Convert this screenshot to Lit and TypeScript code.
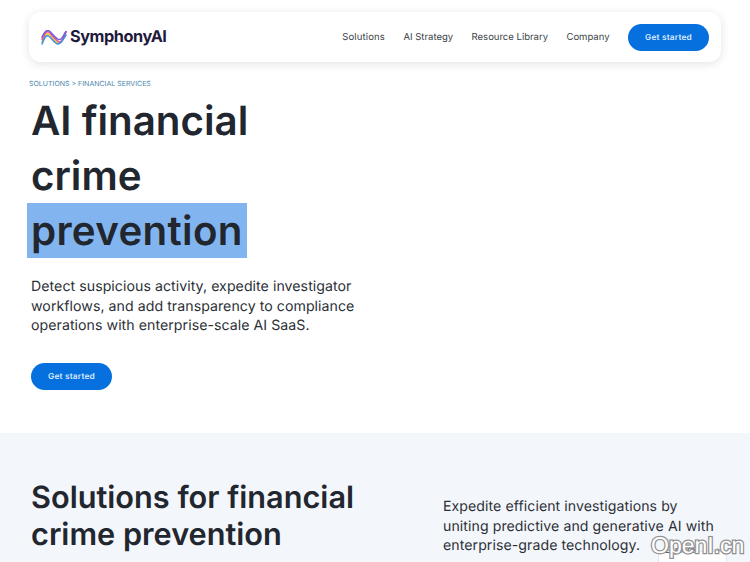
import { css, html, LitElement } from 'lit'
import { customElement } from 'lit/decorators.js'

const navLinks = ['Solutions', 'AI Strategy', 'Resource Library', 'Company']

@customElement('app-root')
export class AppRoot extends LitElement {
  static styles = css`
    :host {
      position: relative;
      display: block;
      width: 750px;
      height: 562px;
      overflow: hidden;
      background: #fff;
      color: #22262e;
      font-family: Inter, 'Liberation Sans', sans-serif;
      text-rendering: geometricPrecision;
    }

    .nav {
      display: flex;
      align-items: center;
      justify-content: space-between;
      height: 50px;
      margin: 12px 29px 0;
      padding: 0 12px;
      border-radius: 12px;
      background: #fff;
      box-shadow: 0 2px 10px rgb(20 30 60 / 12%);
      box-sizing: border-box;
    }

    .logo {
      display: flex;
      align-items: center;
      gap: 3px;
      color: #1f1a3d;
      font-size: 16.3px;
      font-weight: 700;
      letter-spacing: -0.45px;
      line-height: 20px;
    }

    .logo span {
      margin-top: -2px;
    }

    .links {
      display: flex;
      align-items: center;
      gap: 18.5px;
      font-size: 9.5px;
      color: #3a3f47;
    }

    .links span:first-child {
      letter-spacing: 0.15px;
    }

    .button {
      display: flex;
      align-items: center;
      justify-content: center;
      width: 81px;
      height: 27px;
      padding-top: 1px;
      border-radius: 14px;
      background: #0670de;
      color: #dcebff;
      font-size: 8.3px;
      font-weight: 600;
      letter-spacing: 0.2px;
      box-sizing: border-box;
    }

    .hero {
      height: 371px;
      padding: 17px 31px 0;
      box-sizing: border-box;
    }

    .crumb {
      margin-left: -2px;
      color: #4a86ad;
      font-size: 7px;
      line-height: 9px;
      text-transform: uppercase;
    }

    h1 {
      margin: 5px 0 0;
      font-size: 40.3px;
      font-weight: 600;
      line-height: 55px;
    }

    .mark {
      margin: 0 -4px;
      padding: 3px 4px;
      background: #82b5f0;
      letter-spacing: 0.3px;
    }

    .lead {
      width: 330px;
      margin: 19px 0 0;
      font-size: 14.15px;
      line-height: 19.5px;
      letter-spacing: 0.05px;
      color: #2b2f36;
    }

    .hero .button {
      margin-top: 27px;
    }

    .solutions {
      display: flex;
      justify-content: space-between;
      height: 129px;
      padding: 47px 0 0 31px;
      background: #f3f6fb;
      box-sizing: border-box;
    }

    h2 {
      margin: 0;
      font-size: 30.7px;
      font-weight: 600;
      line-height: 36.5px;
    }

    .solutions p {
      width: 307px;
      padding-right: 30px;
      margin: 17px 0 0;
      font-size: 14.1px;
      line-height: 19.5px;
      letter-spacing: 0.08px;
      color: #2b2f36;
      box-sizing: border-box;
    }

    .explore {
      position: absolute;
      left: 658px;
      top: 551px;
      display: flex;
      justify-content: space-between;
      width: 69px;
      height: 20px;
      padding: 0 6px;
      border: 1px solid #e3e6ea;
      background: #fff;
      color: #3a3f47;
      font-size: 8.5px;
      line-height: 10px;
      box-sizing: border-box;
    }

    .explore span {
      margin-top: -6px;
    }

    .watermark {
      position: absolute;
      left: 651px;
      top: 531px;
      color: #fff;
      font-family: 'Liberation Sans', sans-serif;
      font-size: 23px;
      line-height: 28px;
      paint-order: stroke fill;
      -webkit-text-stroke: 2.5px #909090;
    }
  `

  private renderLogo() {
    return html`
      <svg width="26" height="15" viewBox="0 0 26 15" fill="none" stroke-width="1.5" stroke-linecap="round">
        <path d="M1 12C4 4 6 2 9 5s6 8 9 8 4-5 7-11" stroke="#f2c230" />
        <path d="M1 9.5C4 2 6 0 9 3s7 9 10 9 3-5 6-10" stroke="#e0559b" />
        <path d="M1 7C4 1 6-1 9 1.500s7 9 10 8 3-4 6-8" stroke="#7a5cd6" />
        <path d="M1 14C4 6 6 4 9 7s5 7 8 7 5-4 8-9" stroke="#3a8fe0" />
      </svg>
      <span>SymphonyAI</span>
    `
  }

  render() {
    return html`
      <nav class="nav">
        <div class="logo">${this.renderLogo()}</div>
        <div class="links">
          ${navLinks.map((link) => html`<span>${link}</span>`)}
          <span class="button">Get started</span>
        </div>
      </nav>
      <section class="hero">
        <div class="crumb">Solutions &gt; Financial Services</div>
        <h1>AI financial<br />crime<br /><span class="mark">prevention</span></h1>
        <p class="lead">
          Detect suspicious activity, expedite investigator workflows, and add
          transparency to compliance operations with enterprise-scale AI SaaS.
        </p>
        <div class="button">Get started</div>
      </section>
      <section class="solutions">
        <h2>Solutions for financial<br />crime prevention</h2>
        <p>
          Expedite efficient investigations by uniting predictive and generative
          AI with enterprise-grade technology.
        </p>
      </section>
      <div class="explore"><span>Explore</span><span>›</span></div>
      <div class="watermark">OpenI.cn</div>
    `
  }
}
